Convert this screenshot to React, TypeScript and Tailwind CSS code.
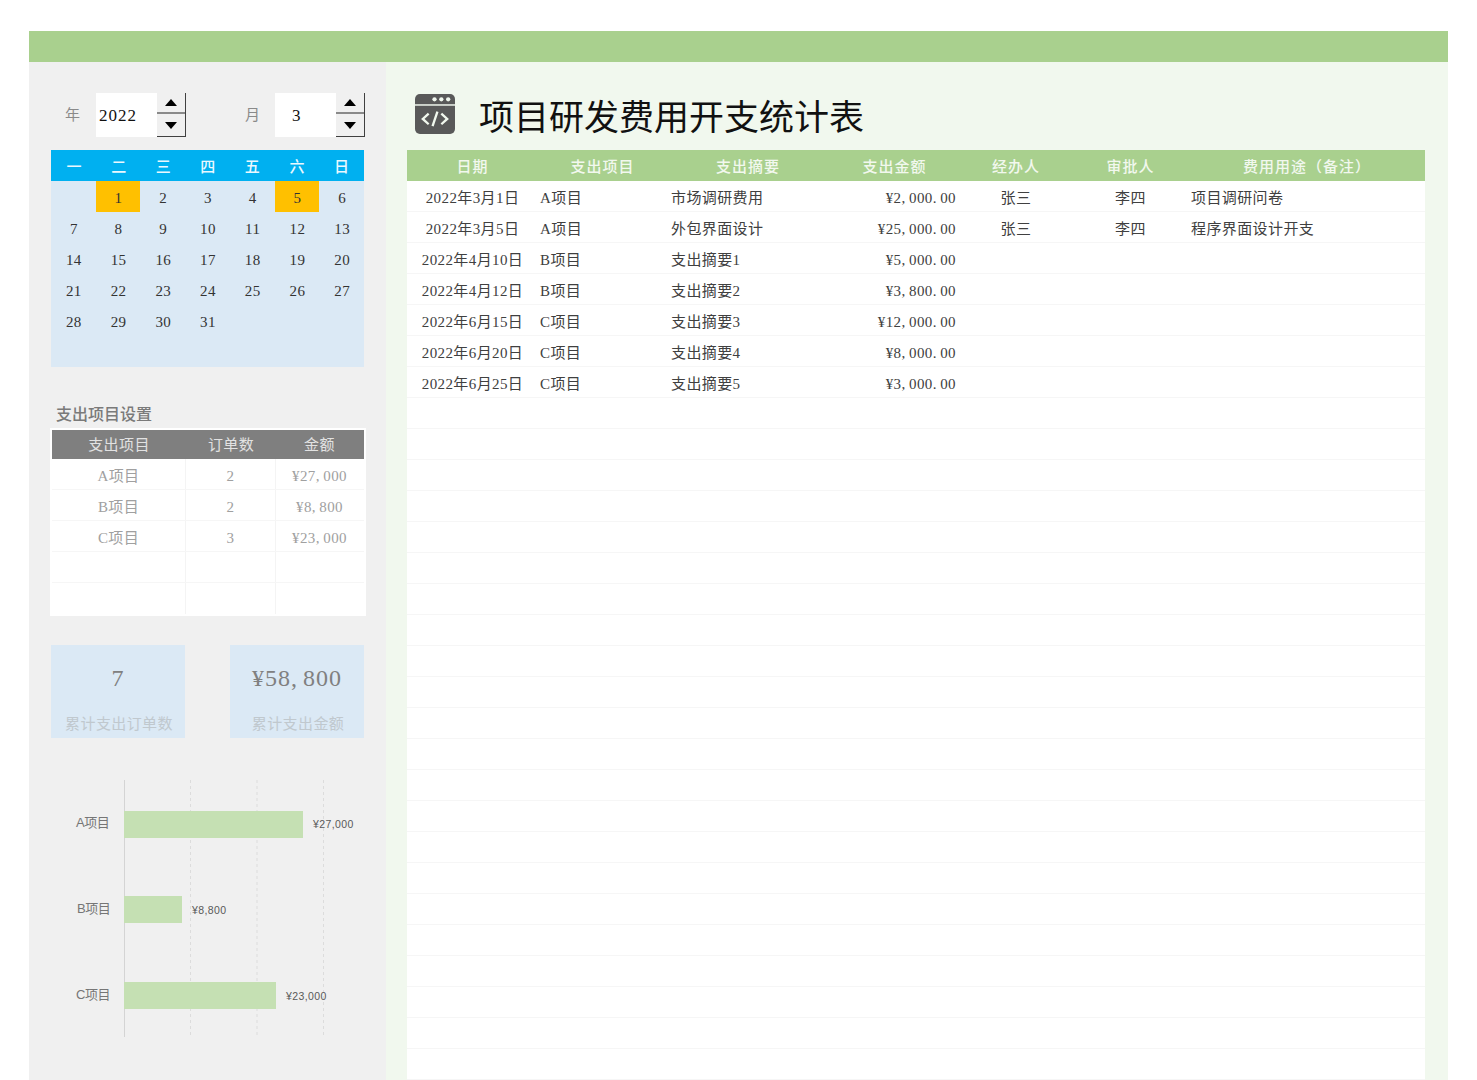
const rows = [
  ["2022年3月1日", "A项目", "市场调研费用", "¥2,000.00", "张三", "李四", "项目调研问卷"],
  ["2022年3月5日", "A项目", "外包界面设计", "¥25,000.00", "张三", "李四", "程序界面设计开支"],
  ["2022年4月10日", "B项目", "支出摘要1", "¥5,000.00", "", "", ""],
  ["2022年4月12日", "B项目", "支出摘要2", "¥3,800.00", "", "", ""],
  ["2022年6月15日", "C项目", "支出摘要3", "¥12,000.00", "", "", ""],
  ["2022年6月20日", "C项目", "支出摘要4", "¥8,000.00", "", "", ""],
  ["2022年6月25日", "C项目", "支出摘要5", "¥3,000.00", "", "", ""],
];
const blanks = Array.from({ length: 22 }, (_, i) => i);
const heads = ["日期", "支出项目", "支出摘要", "支出金额", "经办人", "审批人", "费用用途（备注）"];
const weekdays = ["一", "二", "三", "四", "五", "六", "日"];
const days = ["", "1", "2", "3", "4", "5", "6", "7", "8", "9", "10", "11", "12", "13", "14", "15", "16", "17", "18", "19", "20", "21", "22", "23", "24", "25", "26", "27", "28", "29", "30", "31"];
const projects = [
  ["A项目", "2", "¥27,000"],
  ["B项目", "2", "¥8,800"],
  ["C项目", "3", "¥23,000"],
  ["", "", ""],
  ["", "", ""],
];

function Amt({ v }: { v: string }) {
  return (
    <>
      {v.split(/([,.])/).map((part, i) =>
        part === "," || part === "." ? (
          <span key={i} className="inline-block w-[0.5em] text-left">{part}</span>
        ) : (
          <span key={i}>{part}</span>
        ),
      )}
    </>
  );
}

function Spinner() {
  return (
    <div className="flex h-[44px] w-[29px] flex-col border-r border-b border-[#404040] bg-[#f0f0f0]">
      <div className="flex h-[21px] items-center justify-center border-b-2 border-[#8a8a8a]">
        <svg width="12" height="7" viewBox="0 0 12 7"><path d="M6 0 L12 7 L0 7 Z" fill="#000" /></svg>
      </div>
      <div className="flex flex-1 items-center justify-center">
        <svg width="12" height="7" viewBox="0 0 12 7"><path d="M0 0 L12 0 L6 7 Z" fill="#000" /></svg>
      </div>
    </div>
  );
}

function Chart() {
  const sans = "font-['Liberation_Sans','Noto_Sans_CJK_SC',sans-serif]";
  const bars = [
    { label: "A项目", value: "¥27,000", y: 31, w: 179, h: 27, lx: 47, vx: 284, dy: 16 },
    { label: "B项目", value: "¥8,800", y: 116, w: 58, h: 27, lx: 48, vx: 163, dy: 17 },
    { label: "C项目", value: "¥23,000", y: 202, w: 152, h: 27, lx: 47, vx: 257, dy: 17 },
  ];
  return (
    <svg width="330" height="258" viewBox="0 0 330 258" className={`mt-[42px] -ml-[22px] block ${sans}`}>
      <line x1="95.5" y1="0" x2="95.5" y2="257" stroke="#d4d4d4" />
      {[161.5, 228, 294.5].map((x) => (
        <line key={x} x1={x} y1="0" x2={x} y2="257" stroke="#dcdcdc" strokeDasharray="3 3" />
      ))}
      {bars.map((b) => (
        <g key={b.label}>
          <rect x="95" y={b.y} width={b.w} height={b.h} fill="#c5e0b3" />
          <text x={b.lx} y={b.y + b.dy} fontSize="13" fill="#767676" letterSpacing="-0.5">{b.label}</text>
          <text x={b.vx} y={b.y + b.dy + 1} fontSize="10.5" fill="#595959">{b.value}</text>
        </g>
      ))}
    </svg>
  );
}

export default function App() {
  return (
    <div className="h-[1080px] w-[1477px] overflow-hidden bg-white pt-[31px] pl-[29px] font-['Liberation_Serif','Noto_Sans_CJK_SC',serif] text-[15px] tracking-[0.4px] text-[#404040]">
      <div className="flex h-[1049px] w-[1419px] flex-col">
        <div className="h-[31px] bg-[#a9d08e]" />
        <div className="flex flex-1">
          {/* left panel */}
          <div className="w-[357px] bg-[#f0f0f0] pt-[31px] pl-[22px]">
            <div className="flex h-[44px] w-[314px] items-center">
              <span className="w-[45px] pl-[14px] text-[#8a8a8a]">年</span>
              <div className="flex h-[44px] w-[61px] items-center bg-white pt-[2px] pl-[3px] text-[17px] tracking-[1px] text-[#111]">2022</div>
              <Spinner />
              <span className="w-[89px] pl-[59px] text-[#8a8a8a]">月</span>
              <div className="flex h-[44px] w-[61px] items-center bg-white pt-[2px] pl-[17px] text-[17px] text-[#111]">3</div>
              <Spinner />
            </div>

            <div className="mt-[13px] w-[313px] bg-[#dbe9f5]">
              <div className="grid h-[31px] grid-cols-7 items-center bg-[#00b0f0] pt-[4px] pl-px text-center font-medium text-[#eaf8ff]">
                {weekdays.map((d) => <span key={d}>{d}</span>)}
              </div>
              <div className="grid grid-cols-7 grid-rows-[repeat(6,31px)] text-center text-[#333]">
                {days.map((d, i) => (
                  <div key={i} className={`flex items-center justify-center pt-[4px] pl-px ${d === "1" || d === "5" ? "bg-[#ffc000]" : ""}`}>{d}</div>
                ))}
              </div>
            </div>

            <div className="mt-[38px] ml-[5px] h-[23px] text-[16px] leading-[20px] font-medium tracking-[0px] text-[#7a7a7a]">支出项目设置</div>
            <div className="-ml-px h-[188px] w-[316px] bg-white p-[2px] text-[#a0a0a0]">
              <div className="grid h-[29px] grid-cols-[134px_90px_87px] items-center bg-[#7f7f7f] pt-[2px] text-center text-[#e2e2e2]">
                <span>支出项目</span>
                <span>订单数</span>
                <span>金额</span>
              </div>
              {projects.map((p, i) => (
                <div key={i} className={`grid h-[31px] grid-cols-[134px_90px_87px] text-center ${i < 4 ? "border-b border-[#f6f6f6]" : ""}`}>
                  <span className="flex items-center justify-center border-r border-[#f4f4f4] pt-[4px]">{p[0]}</span>
                  <span className="flex items-center justify-center border-r border-[#f4f4f4] pt-[4px]">{p[1]}</span>
                  <span className="flex items-center justify-center pt-[4px]"><span><Amt v={p[2]} /></span></span>
                </div>
              ))}
            </div>

            <div className="mt-[29px] flex w-[313px] justify-between">
              {[["7", "累计支出订单数"], ["¥58,800", "累计支出金额"]].map(([v, l]) => (
                <div key={l} className="flex h-[93px] w-[134px] flex-col items-center bg-[#dbe9f5] pt-[15px]">
                  <span className="h-[36px] text-[24px] leading-[36px] tracking-[1px] font-medium text-[#808080]"><Amt v={v} /></span>
                  <span className="mt-[17px] pl-[2px] text-[#c0c8ce]">{l}</span>
                </div>
              ))}
            </div>

            <Chart />
          </div>

          {/* right panel */}
          <div className="flex-1 bg-[#f1f8ee] pl-[21px]">
            <div className="flex h-[88px] items-start pt-[32px] pl-[8px]">
              <svg width="40" height="40" viewBox="0 0 41 41" className="shrink-0">
                <rect x="0" y="0" width="41" height="41" rx="5" fill="#595959" />
                <rect x="0" y="10.5" width="41" height="1.5" fill="#f1f8ee" />
                <circle cx="20" cy="5.5" r="2.2" fill="#f1f8ee" />
                <circle cx="27" cy="5.5" r="2.2" fill="#f1f8ee" />
                <circle cx="34" cy="5.5" r="2.2" fill="#f1f8ee" />
                <path d="M14 20 L8 25.5 L14 31 M27 20 L33 25.5 L27 31 M23 18 L18 33" fill="none" stroke="#f1f8ee" strokeWidth="2.4" />
              </svg>
              <h1 className="mt-[2px] ml-[24px] text-[35px] leading-[46px] font-normal tracking-[0px] text-[#111]">项目研发费用开支统计表</h1>
            </div>

            <div className="w-[1018px] bg-white">
              <div className="grid h-[31px] grid-cols-[131px_129px_162px_131px_112px_117px_1fr] items-center bg-[#a9d08e] pt-[4px] text-center font-medium tracking-[1px] text-[#f2f8ee]">
                {heads.map((h) => <span key={h}>{h}</span>)}
              </div>
              {rows.map((r) => (
                <div key={r[0]} className="grid h-[31px] grid-cols-[131px_129px_162px_131px_112px_117px_1fr] items-center border-b border-[#f6f6f6] pt-[4px]">
                  <span className="text-center">{r[0]}</span>
                  <span className="pl-[2px]">{r[1]}</span>
                  <span className="pl-[4px]">{r[2]}</span>
                  <span className="pr-[4px] text-right"><Amt v={r[3]} /></span>
                  <span className="text-center">{r[4]}</span>
                  <span className="text-center">{r[5]}</span>
                  <span className="pl-[2px]">{r[6]}</span>
                </div>
              ))}
              {blanks.map((i) => <div key={i} className="h-[31px] border-b border-[#f6f6f6]" />)}
            </div>
          </div>
        </div>
      </div>
    </div>
  );
}
